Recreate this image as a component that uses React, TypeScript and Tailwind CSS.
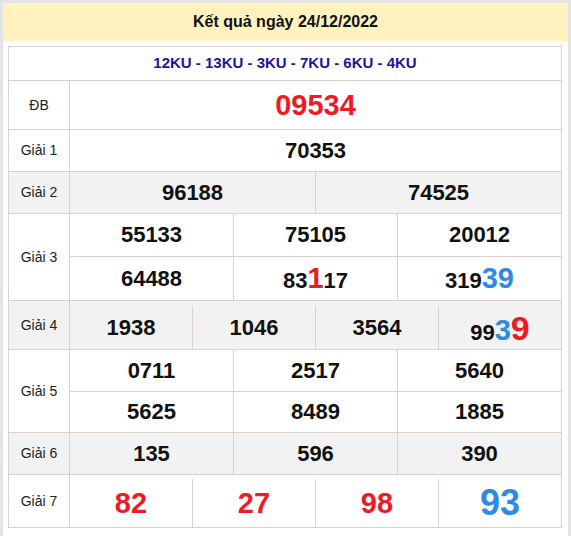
type Part = { t: string; c?: 'red' | 'blue'; s?: number };

const COLOR = { red: 'text-[#ed1c24]', blue: 'text-[#2f8be0]' };

function Num({ parts, base = 'text-[22px]' }: { parts: Part[]; base?: string }) {
  return (
    <span className={`font-bold text-[#111] leading-none ${base}`}>
      {parts.map((p, i) => (
        <span
          key={i}
          className={`${p.c ? COLOR[p.c] : ''} ${p.s === 29 ? 'text-[29px]' : p.s === 34 ? 'text-[34px]' : p.s === 36 ? 'text-[36px]' : ''}`}
        >
          {p.t}
        </span>
      ))}
    </span>
  );
}

const n = (t: string): Part[] => [{ t }];

function Label({ text }: { text: string }) {
  return (
    <div className="w-[61px] shrink-0 border-r border-[#d8d2cb] flex items-center justify-center text-[14px] text-[#222]">
      {text}
    </div>
  );
}

function Cells({ items, cls = '', base }: { items: Part[][]; cls?: string; base?: string }) {
  return (
    <div className={`flex flex-1 ${cls}`}>
      {items.map((p, i) => (
        <div
          key={i}
          className={`flex-1 basis-0 flex items-center justify-center ${i > 0 ? 'border-l border-[#d8d2cb]' : ''}`}
        >
          <Num parts={p} base={base} />
        </div>
      ))}
    </div>
  );
}

export default function App() {
  return (
    <div
      className="w-[571px] h-[536px] bg-[#e4e4e4] pt-[3px] pl-[3px] pr-[3px] overflow-hidden"
      style={{ fontFamily: '"Liberation Sans", Arial, sans-serif' }}
    >
      <div className="bg-white h-full">
        <div className="h-[38px] bg-[#fff2bf] flex items-center justify-center font-bold text-[16px] text-[#111]">
          Kết quả ngày 24/12/2022
        </div>
        <div className="pt-[5px] pl-[5px] pr-[6px]">
          <div className="border border-[#d8d2cb] flex flex-col">
            <div className="h-[33px] flex items-center justify-center font-bold text-[15px] text-[#1c169e]">
              12KU - 13KU - 3KU - 7KU - 6KU - 4KU
            </div>

            <div className="h-[49px] flex border-t border-[#d8d2cb]">
              <Label text="ĐB" />
              <div className="flex-1 flex items-center justify-center">
                <Num parts={[{ t: '09534', c: 'red' }]} base="text-[29px]" />
              </div>
            </div>

            <div className="h-[42px] flex border-t border-[#d8d2cb]">
              <Label text="Giải 1" />
              <Cells items={[n('70353')]} />
            </div>

            <div className="h-[42px] flex border-t border-[#d8d2cb] bg-[#f2f2f2]">
              <Label text="Giải 2" />
              <Cells items={[n('96188'), n('74525')]} />
            </div>

            <div className="h-[87px] flex border-t border-[#d8d2cb]">
              <Label text="Giải 3" />
              <div className="flex-1 flex flex-col">
                <Cells cls="h-[42px] flex-none" items={[n('55133'), n('75105'), n('20012')]} />
                <Cells
                  cls="border-t border-[#d8d2cb]"
                  items={[
                    n('64488'),
                    [{ t: '83' }, { t: '1', c: 'red', s: 29 }, { t: '17' }],
                    [{ t: '319' }, { t: '39', c: 'blue', s: 29 }],
                  ]}
                />
              </div>
            </div>

            <div className="h-[49px] flex border-t border-[#d8d2cb] bg-[#f2f2f2]">
              <Label text="Giải 4" />
              <Cells
                cls="pt-[5px]"
                items={[
                  n('1938'),
                  n('1046'),
                  n('3564'),
                  [{ t: '99' }, { t: '3', c: 'blue', s: 29 }, { t: '9', c: 'red', s: 34 }],
                ]}
              />
            </div>

            <div className="h-[83px] flex border-t border-[#d8d2cb]">
              <Label text="Giải 5" />
              <div className="flex-1 flex flex-col">
                <Cells cls="h-[41px] flex-none" items={[n('0711'), n('2517'), n('5640')]} />
                <Cells cls="border-t border-[#d8d2cb]" items={[n('5625'), n('8489'), n('1885')]} />
              </div>
            </div>

            <div className="h-[42px] flex border-t border-[#d8d2cb] bg-[#f2f2f2]">
              <Label text="Giải 6" />
              <Cells items={[n('135'), n('596'), n('390')]} />
            </div>

            <div className="h-[53px] flex border-t border-[#d8d2cb]">
              <Label text="Giải 7" />
              <Cells
                cls="pt-[4px]"
                base="text-[29px]"
                items={[
                  [{ t: '82', c: 'red' }],
                  [{ t: '27', c: 'red' }],
                  [{ t: '98', c: 'red' }],
                  [{ t: '93', c: 'blue', s: 36 }],
                ]}
              />
            </div>
          </div>
        </div>
      </div>
    </div>
  );
}
